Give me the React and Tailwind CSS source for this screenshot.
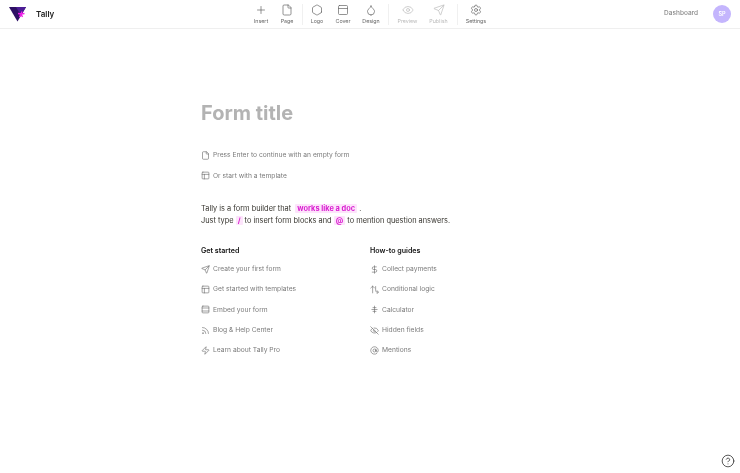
import React from 'react';
import {
  Plus, File, Hexagon, PanelTop, Droplet, Eye, Send, Settings, Layout, Rss, Zap,
  DollarSign, EyeOff, AtSign, CircleHelp,
} from 'lucide-react';

const EmbedIcon = (props) => (
  <svg viewBox="0 0 24 24" fill="none" stroke="currentColor" strokeLinecap="round" strokeLinejoin="round" width={props.size} height={props.size} strokeWidth={props.strokeWidth} className={props.className}>
    <rect x="3" y="3" width="18" height="18" rx="2" />
    <path d="M3 8h18M3 16h18" />
  </svg>
);

const LogicIcon = (props) => (
  <svg viewBox="0 0 24 24" fill="none" stroke="currentColor" strokeLinecap="round" strokeLinejoin="round" width={props.size} height={props.size} strokeWidth={props.strokeWidth} className={props.className}>
    <path d="M7 21V3M2 8l5-5 5 5" />
    <path d="M15 4v11a4 4 0 0 0 4 4h3M19 15l3 4-3 4" />
  </svg>
);

const CalcIcon = (props) => (
  <svg viewBox="0 0 24 24" fill="none" stroke="currentColor" strokeLinecap="round" strokeLinejoin="round" width={props.size} height={props.size} strokeWidth={props.strokeWidth} className={props.className}>
    <path d="M5 12h14M12 3v18M8 7h8M8 17h8" />
  </svg>
);

const navGroups = [
  {
    className: '',
    items: [
      { label: 'Insert', icon: Plus, w: 'w-[26px]' },
      { label: 'Page', icon: File, w: 'w-[26px]' },
    ],
  },
  {
    className: 'ml-[2px] border-l border-[#f0f0f0] pl-[1px]',
    items: [
      { label: 'Logo', icon: Hexagon, w: 'w-[26px]' },
      { label: 'Cover', icon: PanelTop, w: 'w-[26px]' },
      { label: 'Design', icon: Droplet, w: 'w-[30px]' },
    ],
  },
  {
    className: 'ml-[2px] border-l border-[#f0f0f0] pl-[3px]',
    items: [
      { label: 'Preview', icon: Eye, w: 'w-[31px]', muted: true },
      { label: 'Publish', icon: Send, w: 'w-[31px]', muted: true },
    ],
  },
  {
    className: 'ml-[3px] border-l border-[#f0f0f0] pl-[3px]',
    items: [{ label: 'Settings', icon: Settings, w: 'w-[30px]' }],
  },
];

const started = [
  { label: 'Create your first form', icon: Send },
  { label: 'Get started with templates', icon: Layout },
  { label: 'Embed your form', icon: EmbedIcon },
  { label: 'Blog & Help Center', icon: Rss },
  { label: 'Learn about Tally Pro', icon: Zap },
];

const guides = [
  { label: 'Collect payments', icon: DollarSign },
  { label: 'Conditional logic', icon: LogicIcon },
  { label: 'Calculator', icon: CalcIcon },
  { label: 'Hidden fields', icon: EyeOff },
  { label: 'Mentions', icon: AtSign },
];

const Row = ({ icon: Icon, label }) => (
  <div className="flex h-[20.3px] items-center gap-[3px] text-[6.7px] text-[#7b7b7b]">
    <Icon size={9} strokeWidth={1.6} className="w-[9px] shrink-0 text-[#666]" />
    <span>{label}</span>
  </div>
);

const Logo = () => (
  <svg width="18" height="16" viewBox="0 0 18 16">
    <polygon points="0,1 17,1 8.5,15.5" fill="#2e1065" />
    <polygon points="7,1 17,1 12,9.5" fill="#4c1d95" />
    <path d="M13 5.5 L12 8 M12 8 L9 7.5 M12 8 L15.5 7.5 M12 8 L10.5 11 M12 8 L13.5 11" stroke="#f01fe8" strokeWidth="1.4" />
  </svg>
);

export default function App() {
  return (
    <div className="relative h-[473px] w-[740px] overflow-hidden bg-white font-['Inter',sans-serif]">
      <header className="flex h-[29px] items-center border-b border-[#efefef] pl-[9px] pr-[9px] [will-change:opacity]">
        <div className="flex w-[239px] items-center gap-[9px]">
          <Logo />
          <span className="text-[8px] font-semibold text-[#222]">Tally</span>
        </div>
        <nav className="flex items-center">
          {navGroups.map((group, i) => (
            <div key={i} className={`flex items-center ${group.className}`}>
              {group.items.map(({ label, icon: Icon, w, muted }) => (
                <div key={label} className={`flex flex-col items-center gap-[2px] ${w} ${muted ? 'text-[#bbb]' : 'text-[#666]'}`}>
                  <Icon size={12} strokeWidth={1.4} />
                  <span className="text-[5.3px] leading-[7px]">{label}</span>
                </div>
              ))}
            </div>
          ))}
        </nav>
        <div className="ml-auto flex items-center gap-[15px]">
          <span className="text-[6.5px] font-medium text-[#888]">Dashboard</span>
          <div className="flex h-[18px] w-[18px] items-center justify-center rounded-full bg-[#c4b5fd] text-[5.5px] font-semibold text-white">
            SP
          </div>
        </div>
      </header>

      <main className="pl-[201px] [will-change:opacity]">
        <h1 className="mt-[71px] text-[20px] leading-[26px] font-bold text-[#b3b3b3]">Form title</h1>

        <div className="mt-[19.3px]">
          <Row icon={File} label="Press Enter to continue with an empty form" />
          <Row icon={Layout} label="Or start with a template" />
        </div>

        <div className="mt-[17.6px] text-[7.4px] leading-[11.5px] text-[#37352f]">
          <p>
            Tally is a form builder that{' '}
            <span className="ml-[2px] rounded-[1px] bg-[#fde4fb] px-[2px] font-bold text-[#d91fd0]">works like a doc</span> .
          </p>
          <p>
            Just type <span className="rounded-[1px] bg-[#fde4fb] px-[2px] font-bold text-[#d91fd0]">/</span> to insert
            form blocks and <span className="rounded-[1px] bg-[#fde4fb] px-[2px] font-bold text-[#d91fd0]">@</span> to
            mention question answers.
          </p>
        </div>

        <div className="mt-[19.5px] flex">
          <div className="w-[169px]">
            <h2 className="mb-[3px] text-[7.1px] leading-[10px] font-semibold text-[#111]">Get started</h2>
            {started.map((item) => (
              <Row key={item.label} {...item} />
            ))}
          </div>
          <div>
            <h2 className="mb-[3px] text-[7.1px] leading-[10px] font-semibold text-[#111]">How-to guides</h2>
            {guides.map((item) => (
              <Row key={item.label} {...item} />
            ))}
          </div>
        </div>
      </main>

      <button className="absolute top-[454px] left-[721px] text-[#333] [will-change:opacity]">
        <CircleHelp size={14} strokeWidth={1.4} />
      </button>
    </div>
  );
}
